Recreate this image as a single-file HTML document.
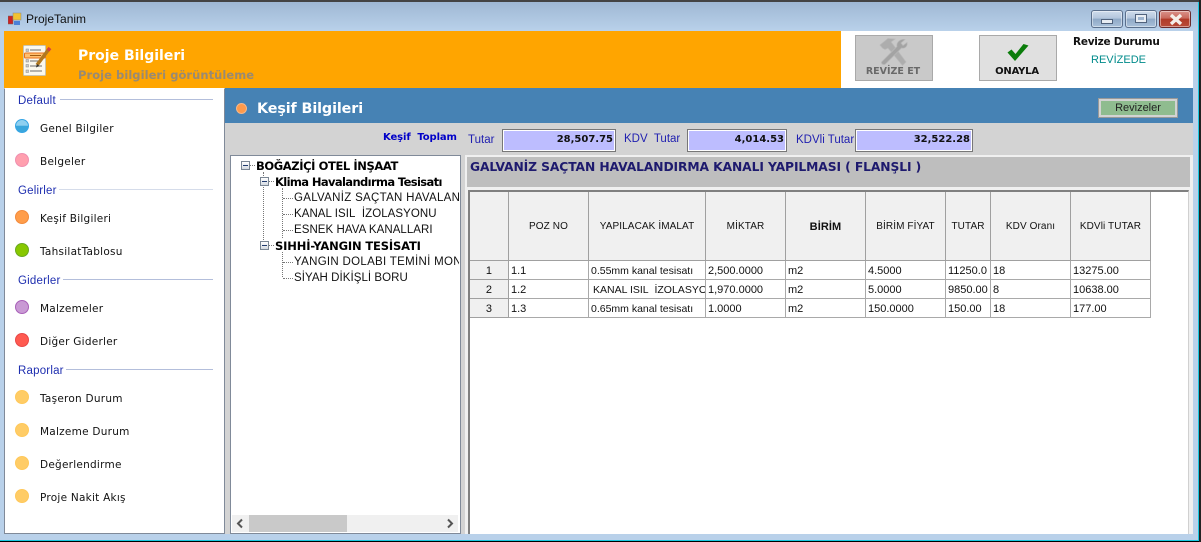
<!DOCTYPE html>
<html><head><meta charset="utf-8">
<style>
html,body{margin:0;padding:0;background:#000}
#w{position:relative;width:1201px;height:542px;overflow:hidden;background:#b9d1ea;font-family:"Liberation Sans",sans-serif;font-size:11px;color:#111}
#w div,#w span.a{position:absolute;box-sizing:border-box;white-space:nowrap}
.b{font-family:"DejaVu Sans",sans-serif;font-weight:bold}
.d{font-family:"DejaVu Sans",sans-serif}
.dot{width:14px;height:14px;border-radius:50%;left:15px}
.ml{left:40px;font-family:"DejaVu Sans",sans-serif;font-size:10.5px;line-height:14px;color:#111;letter-spacing:.25px;margin-top:2px}
.gh{left:18px;font-size:11.5px;line-height:14px;color:#1f2fb0;font-family:"Liberation Sans",sans-serif;letter-spacing:.2px;margin-top:1px}
.gl{height:1px;background:#b3bedb;right:0}
.tv{font-size:11.5px;line-height:16px;color:#111;font-family:"Liberation Sans",sans-serif;letter-spacing:.05px}
.tb{font-size:11.5px;line-height:16px;color:#000;font-family:"DejaVu Sans",sans-serif;font-weight:bold;letter-spacing:-.4px}
.lab{font-size:11.5px;line-height:14px;color:#1f1fb0;font-family:"Liberation Sans",sans-serif}
.val{height:23px;top:129px;border:1px solid #777;background:#bdbdff;outline:0;box-shadow:inset 0 0 0 1px #fff;text-align:right;padding-right:2px;font:bold 10px/20px "DejaVu Sans",sans-serif;color:#111}
.c{background:#fff;border-right:1px solid #a9a9a9;border-bottom:1px solid #a9a9a9;font-size:11px;line-height:21px;padding-left:2px;letter-spacing:0;color:#111;overflow:hidden}
.h{background:#f0f0f0;border-right:1px solid #a0a0a0;border-bottom:1px solid #a0a0a0;font-size:10px;text-align:center;color:#111;letter-spacing:.1px}
.btn{top:35px;width:78px;height:46px;border:1px solid #a9a9a9}
.wb{top:10px;height:18px;width:32px;border:1px solid #5a6f8c;border-radius:3px;background:linear-gradient(#cfdcec 0,#b3c6dc 45%,#8fa9c6 50%,#a9c0da 100%);box-shadow:inset 0 0 0 1px rgba(255,255,255,.45)}
.tl{border-left:1px dotted #777}
.tt{border-top:1px dotted #777;height:1px}
.pm{width:9px;height:9px;border:1px solid #7b8794;background:linear-gradient(#fff,#d5dbe2)}
.pm i{position:absolute;left:1px;top:3px;width:5px;height:1px;background:#1f3a6e}
</style></head><body>
<div id="w">
<!-- window frame -->
<div style="left:0;top:0;width:1201px;height:2px;background:#444"></div>
<div style="left:0;top:2px;width:1201px;height:29px;background:linear-gradient(#9fb8d4,#b9d1ea)"></div>
<div style="left:0;top:540px;width:1201px;height:2px;background:#19c8e0"></div>
<div style="left:0;top:541px;width:1201px;height:1px;background:#000"></div>
<div style="left:1199px;top:0;width:2px;height:542px;background:#222"></div>
<div style="left:1198px;top:2px;width:1px;height:539px;background:#19c8e0"></div>

<!-- title icon -->
<svg style="position:absolute;left:8px;top:12px" width="14" height="14"><rect x="0" y="4" width="5" height="8" fill="#c22" stroke="#666" stroke-width=".5"/><rect x="5" y="1" width="8" height="7" fill="#f2c230" stroke="#888" stroke-width=".5"/><rect x="6" y="9" width="6" height="4" fill="#4a80d8"/></svg>
<div style="left:26px;top:12px;font-size:12px;line-height:15px;color:#111">ProjeTanim</div>

<!-- window buttons -->
<div class="wb" style="left:1091px"><div style="left:9px;top:8px;width:12px;height:5px;background:#e8edf3;border:1px solid #50627c"></div></div>
<div class="wb" style="left:1125px"><div style="left:9px;top:3px;width:12px;height:9px;background:#e8edf3;border:1px solid #50627c"></div><div style="left:12px;top:6px;width:6px;height:3px;background:#9db4cf"></div></div>
<div class="wb" style="left:1159px;width:32px;border-color:#6b2a2a;background:linear-gradient(#d9938a 0,#c9695c 45%,#b03a28 50%,#b94c38 100%)"><svg style="position:absolute;left:8px;top:2px" width="16" height="13"><path d="M3 2L13 11M13 2L3 11" stroke="#f4efe9" stroke-width="3.4"/></svg></div>

<!-- header -->
<div style="left:4px;top:31px;width:1189px;height:57px;background:#fff"></div>
<div style="left:4px;top:31px;width:837px;height:57px;background:#ffa500"></div>
<svg style="position:absolute;left:22px;top:44px" width="34" height="34">
<rect x="1.5" y="1.5" width="22" height="30" rx="1" fill="#fbf8ee" stroke="#c9c4b0"/>
<g stroke="#6c6c6c" stroke-width="1"><path d="M8 6H19M8 17H20M8 22H20M8 27H20"/></g>
<g fill="#ccc" stroke="#888" stroke-width=".5"><rect x="4" y="5" width="2.5" height="2.5"/><rect x="4" y="15.5" width="2.5" height="2.5"/><rect x="4" y="20.5" width="2.5" height="2.5"/><rect x="4" y="26" width="2.5" height="2.5"/></g>
<rect x="2.5" y="9" width="21" height="5" rx="1" fill="#ffc070" stroke="#e8701a"/>
<path d="M8 11.5H19" stroke="#a05a10"/>
<path d="M15 21L27 5" stroke="#b07820" stroke-width="3.5"/><path d="M26 6.5L28 4" stroke="#d84040" stroke-width="3.5"/><path d="M14 23.5L15 20L17.5 22Z" fill="#333"/>
</svg>
<div class="b" style="left:78px;top:47px;font-size:14px;line-height:18px;color:#fff">Proje Bilgileri</div>
<div class="b" style="left:78px;top:67px;font-size:11.5px;line-height:16px;color:#998a72;letter-spacing:.05px">Proje bilgileri görüntüleme</div>

<!-- Revize Et -->
<div class="btn" style="left:855px;background:#c9c9c9"></div>
<svg style="position:absolute;left:877px;top:37px" width="34" height="30">
<g stroke="#b8b8b8" stroke-width=".7">
<path d="M3 8L11 1.5L18 2L14 5L16 7.5L29 25L25.5 28.5L11 11L8 12.5L5.5 11Z" fill="#adadad"/>
<path d="M28 2.5L24 6L26 8.5L30 5.5C31 9 28 12 24.5 11L9 26.5C7.5 28.5 4 27.5 4.5 25L20 9.5C19 5.5 23.5 1.5 28 2.5Z" fill="#a3a3a3"/>
</g></svg>
<div class="b" style="left:854px;top:64px;width:78px;text-align:center;font-size:9.5px;line-height:16px;color:#696969">REVİZE ET</div>
<!-- Onayla -->
<div class="btn" style="left:979px;background:#e0e0e0"></div>
<svg style="position:absolute;left:1006px;top:43px" width="24" height="20"><path d="M1.5 9.5L9 18L22.5 2.5L17.5 1L9.5 11L5.5 6.5Z" fill="#0b7d0b"/></svg>
<div class="b" style="left:978px;top:64px;width:78px;text-align:center;font-size:10px;line-height:16px;color:#111;letter-spacing:-.2px">ONAYLA</div>
<div class="b" style="left:1073px;top:35px;font-size:10.5px;line-height:14px;color:#111;letter-spacing:-.25px">Revize Durumu</div>
<div style="left:1091px;top:53px;font-size:11px;line-height:14px;color:#008b8b">REVİZEDE</div>

<!-- sidebar -->
<div style="left:4px;top:88px;width:221px;height:446px;background:#fff;border:1px solid #808a99;border-top-color:#fff;border-left-color:#808a99"></div>
<div class="gh" style="top:93px">Default</div><div class="gl" style="left:60px;width:153px;top:99px"></div>
<div class="gh" style="top:183px">Gelirler</div><div class="gl" style="left:59px;width:154px;top:189px;background:#d5dcea"></div>
<div class="gh" style="top:273px">Giderler</div><div class="gl" style="left:63px;width:150px;top:279px"></div>
<div class="gh" style="top:363px">Raporlar</div><div class="gl" style="left:66px;width:147px;top:369px"></div>

<div class="dot" style="top:119px;background:linear-gradient(#8fd0f0 0,#8fd0f0 45%,#3aa6dc 50%,#3aa6dc 100%);border:1.5px solid #35a5e5"></div><div class="ml" style="top:120px">Genel Bilgiler</div>
<div class="dot" style="top:153px;background:#ff9fae;border:1.5px solid #ef8fb0"></div><div class="ml" style="top:153px">Belgeler</div>
<div class="dot" style="top:210px;background:#ff9d4a;border:1.5px solid #f28a3c"></div><div class="ml" style="top:210px">Keşif Bilgileri</div>
<div class="dot" style="top:243px;background:#88c800;border:1.5px solid #6aa820"></div><div class="ml" style="top:243px">TahsilatTablosu</div>
<div class="dot" style="top:300px;background:#c99ad4;border:1.5px solid #a860b8"></div><div class="ml" style="top:300px">Malzemeler</div>
<div class="dot" style="top:333px;background:#ff5a50;border:1.5px solid #e84848"></div><div class="ml" style="top:333px">Diğer Giderler</div>
<div class="dot" style="top:390px;background:#ffcc66;border:1.5px solid #ffc85a"></div><div class="ml" style="top:390px">Taşeron Durum</div>
<div class="dot" style="top:423px;background:#ffcc66;border:1.5px solid #ffc85a"></div><div class="ml" style="top:423px">Malzeme Durum</div>
<div class="dot" style="top:456px;background:#ffcc66;border:1.5px solid #ffc85a"></div><div class="ml" style="top:456px">Değerlendirme</div>
<div class="dot" style="top:489px;background:#ffcc66;border:1.5px solid #ffc85a"></div><div class="ml" style="top:489px">Proje Nakit Akış</div>

<!-- right pane -->
<div style="left:225px;top:88px;width:968px;height:35px;background:#4682b4"></div>
<div style="left:225px;top:123px;width:968px;height:411px;background:#d3d3d3"></div>
<div style="left:236px;top:103px;width:11px;height:11px;border-radius:50%;background:#ff9a4a;border:1px solid #f6b88a"></div>
<div class="b" style="left:257px;top:100px;font-size:14.3px;line-height:18px;color:#fff;letter-spacing:-.1px">Keşif Bilgileri</div>
<div style="left:1098px;top:98px;width:80px;height:20px;background:#8fbc8f;border:3px solid #d3d3d3;outline:1px solid #999;outline-offset:-1px;text-align:center;font-size:11px;line-height:14px;color:#222">Revizeler</div>

<div class="b" style="left:383px;top:131px;font-size:10px;line-height:14px;color:#0000c8;letter-spacing:-.1px">Keşif&nbsp; Toplam</div>
<div class="lab" style="left:468px;top:133px">Tutar</div>
<div class="val" style="left:502px;width:114px">28,507.75</div>
<div class="lab" style="left:624px;top:132px">KDV&nbsp; Tutar</div>
<div class="val" style="left:687px;width:100px">4,014.53</div>
<div class="lab" style="left:796px;top:133px">KDVli Tutar</div>
<div class="val" style="left:855px;width:118px">32,522.28</div>

<!-- tree -->
<div style="left:230px;top:155px;width:231px;height:379px;background:#fff;border:1px solid #808a99"></div>
<div class="pm" style="left:241px;top:161px"><i></i></div>
<div class="tt" style="left:250px;top:165px;width:5px"></div>
<div class="tb" style="left:256px;top:158px;letter-spacing:-.4px">BOĞAZİÇİ OTEL İNŞAAT</div>
<div class="tl" style="left:263px;top:172px;height:70px"></div>
<div class="pm" style="left:260px;top:177px"><i></i></div>
<div class="tt" style="left:269px;top:181px;width:5px"></div>
<div class="tb" style="left:275px;top:174px;letter-spacing:-.62px">Klima Havalandırma Tesisatı</div>
<div class="tl" style="left:282px;top:188px;height:50px"></div>
<div class="tt" style="left:283px;top:198px;width:10px"></div>
<div class="tt" style="left:283px;top:214px;width:10px"></div>
<div class="tt" style="left:283px;top:230px;width:10px"></div>
<div style="left:294px;top:190px;width:165px;height:16px;overflow:hidden"><span class="tv" style="letter-spacing:.3px">GALVANİZ SAÇTAN HAVALANDIRMA</span></div>
<div class="tv" style="left:294px;top:206px">KANAL ISIL&nbsp; İZOLASYONU</div>
<div class="tv" style="left:294px;top:222px">ESNEK HAVA KANALLARI</div>
<div class="pm" style="left:260px;top:241px"><i></i></div>
<div class="tt" style="left:269px;top:245px;width:5px"></div>
<div class="tb" style="left:275px;top:238px;letter-spacing:-.15px">SIHHİ-YANGIN TESİSATI</div>
<div class="tl" style="left:282px;top:252px;height:25px"></div>
<div class="tt" style="left:283px;top:262px;width:10px"></div>
<div class="tt" style="left:283px;top:278px;width:10px"></div>
<div style="left:294px;top:254px;width:165px;height:16px;overflow:hidden"><span class="tv" style="letter-spacing:.3px">YANGIN DOLABI TEMİNİ MONTAJI</span></div>
<div class="tv" style="left:294px;top:270px">SİYAH DİKİŞLİ BORU</div>
<!-- tree scrollbar -->
<div style="left:232px;top:515px;width:226px;height:17px;background:#f0f0f0"></div>
<div style="left:249px;top:515px;width:98px;height:17px;background:#c9c9c9"></div>
<svg style="position:absolute;left:235px;top:518px" width="10" height="11"><path d="M7 1.5L3 5.5L7 9.5" fill="none" stroke="#555" stroke-width="2"/></svg>
<svg style="position:absolute;left:445px;top:518px" width="10" height="11"><path d="M3 1.5L7 5.5L3 9.5" fill="none" stroke="#555" stroke-width="2"/></svg>

<!-- title -->
<div style="left:465px;top:155px;width:728px;height:379px;background:#f0f0f0"></div>
<div style="left:467px;top:157px;width:723px;height:30px;background:#bebebe"></div>
<div class="b" style="left:470px;top:159px;font-size:12.3px;line-height:17px;color:#1e1a6e;letter-spacing:-.1px">GALVANİZ SAÇTAN HAVALANDIRMA KANALI YAPILMASI ( FLANŞLI )</div>

<!-- grid -->
<div style="left:468px;top:190px;width:721px;height:344px;background:#fff;border-top:2px solid #808080;border-left:2px solid #808080;border-right:1px solid #d0d0d0"></div>
<div class="h" style="left:470px;top:192px;width:39px;height:69px"></div>
<div class="h" style="left:509px;top:192px;width:80px;height:69px;line-height:70px">POZ NO</div>
<div class="h" style="left:589px;top:192px;width:117px;height:69px;line-height:70px">YAPILACAK İMALAT</div>
<div class="h" style="left:706px;top:192px;width:80px;height:69px;line-height:70px">MİKTAR</div>
<div class="h" style="left:786px;top:192px;width:80px;height:69px;line-height:70px;font-weight:bold;font-size:11px">BİRİM</div>
<div class="h" style="left:866px;top:192px;width:80px;height:69px;line-height:70px">BİRİM FİYAT</div>
<div class="h" style="left:946px;top:192px;width:45px;height:69px;line-height:70px">TUTAR</div>
<div class="h" style="left:991px;top:192px;width:80px;height:69px;line-height:70px">KDV Oranı</div>
<div class="h" style="left:1071px;top:192px;width:80px;height:69px;line-height:70px">KDVli TUTAR</div>

<div class="h" style="left:470px;top:261px;width:39px;height:19px;line-height:21px;font-size:11px">1</div>
<div class="h" style="left:470px;top:280px;width:39px;height:19px;line-height:21px;font-size:11px">2</div>
<div class="h" style="left:470px;top:299px;width:39px;height:19px;line-height:21px;font-size:11px">3</div>

<div class="c" style="left:509px;top:261px;width:80px;height:19px">1.1</div>
<div class="c" style="left:589px;top:261px;width:117px;height:19px;font-size:10.5px">0.55mm kanal tesisatı</div>
<div class="c" style="left:706px;top:261px;width:80px;height:19px">2,500.0000</div>
<div class="c" style="left:786px;top:261px;width:80px;height:19px">m2</div>
<div class="c" style="left:866px;top:261px;width:80px;height:19px">4.5000</div>
<div class="c" style="left:946px;top:261px;width:45px;height:19px">11250.0</div>
<div class="c" style="left:991px;top:261px;width:80px;height:19px">18</div>
<div class="c" style="left:1071px;top:261px;width:80px;height:19px">13275.00</div>

<div class="c" style="left:509px;top:280px;width:80px;height:19px">1.2</div>
<div class="c" style="left:589px;top:280px;width:117px;height:19px;padding-left:4px;font-size:10.5px">KANAL ISIL&nbsp; İZOLASYONU</div>
<div class="c" style="left:706px;top:280px;width:80px;height:19px">1,970.0000</div>
<div class="c" style="left:786px;top:280px;width:80px;height:19px">m2</div>
<div class="c" style="left:866px;top:280px;width:80px;height:19px">5.0000</div>
<div class="c" style="left:946px;top:280px;width:45px;height:19px">9850.00</div>
<div class="c" style="left:991px;top:280px;width:80px;height:19px">8</div>
<div class="c" style="left:1071px;top:280px;width:80px;height:19px">10638.00</div>

<div class="c" style="left:509px;top:299px;width:80px;height:19px">1.3</div>
<div class="c" style="left:589px;top:299px;width:117px;height:19px;font-size:10.5px">0.65mm kanal tesisatı</div>
<div class="c" style="left:706px;top:299px;width:80px;height:19px">1.0000</div>
<div class="c" style="left:786px;top:299px;width:80px;height:19px">m2</div>
<div class="c" style="left:866px;top:299px;width:80px;height:19px">150.0000</div>
<div class="c" style="left:946px;top:299px;width:45px;height:19px">150.00</div>
<div class="c" style="left:991px;top:299px;width:80px;height:19px">18</div>
<div class="c" style="left:1071px;top:299px;width:80px;height:19px">177.00</div>
</div>
</body></html>
